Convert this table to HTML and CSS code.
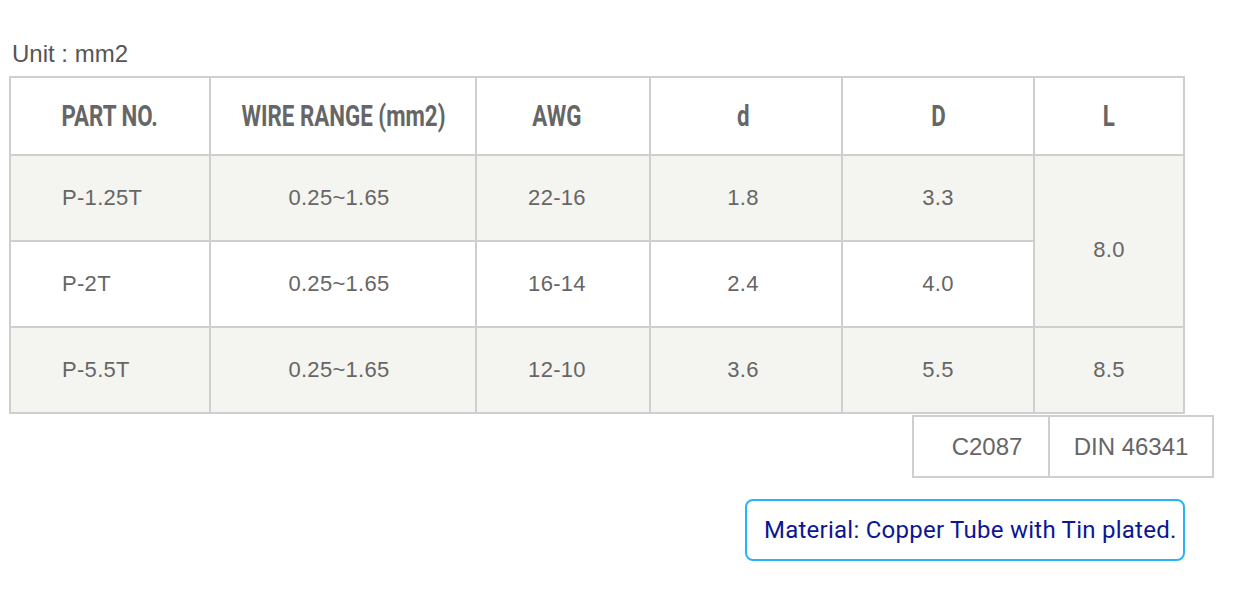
FILE: index.html
```html
<!DOCTYPE html>
<html>
<head>
<meta charset="utf-8">
<link rel="stylesheet" href="styles.css">
</head>
<body>
<div class="page">
  <div class="unit">Unit : mm2</div>
  <table class="spec">
    <colgroup>
      <col class="c1"><col class="c2"><col class="c3"><col class="c4"><col class="c5"><col class="c6">
    </colgroup>
    <thead>
      <tr>
        <th><span class="hd">PART NO.</span></th>
        <th class="sh8"><span class="hd">WIRE RANGE (mm2)</span></th>
        <th class="sh12"><span class="hd">AWG</span></th>
        <th class="sh6"><span class="hd">d</span></th>
        <th><span class="hd">D</span></th>
        <th><span class="hd">L</span></th>
      </tr>
    </thead>
    <tbody>
      <tr class="shade">
        <td class="part">P-1.25T</td>
        <td class="sh8">0.25~1.65</td>
        <td class="sh12">22-16</td>
        <td class="sh6">1.8</td>
        <td>3.3</td>
        <td rowspan="2" class="shade-cell merged">8.0</td>
      </tr>
      <tr>
        <td class="part">P-2T</td>
        <td class="sh8">0.25~1.65</td>
        <td class="sh12">16-14</td>
        <td class="sh6">2.4</td>
        <td>4.0</td>
      </tr>
      <tr class="shade">
        <td class="part">P-5.5T</td>
        <td class="sh8">0.25~1.65</td>
        <td class="sh12">12-10</td>
        <td class="sh6">3.6</td>
        <td>5.5</td>
        <td>8.5</td>
      </tr>
    </tbody>
  </table>
  <div class="std-row">
    <table class="std">
      <tr>
        <td class="s1">C2087</td>
        <td class="s2">DIN 46341</td>
      </tr>
    </table>
  </div>
  <div class="mat-row">
    <div class="material">Material: Copper Tube with Tin plated.</div>
  </div>
</div>
</body>
</html>
```

FILE: styles.css
```css
html, body {
  margin: 0;
  padding: 0;
  background: #fff;
}
.page {
  padding-left: 9px;
  font-family: "Liberation Sans", Arial, sans-serif;
  color: #666;
}
.unit {
  margin-top: 41px;
  height: 26px;
  line-height: 26px;
  font-size: 24px;
  padding-left: 3px;
  color: #555;
  margin-bottom: 9px;
}
.spec {
  border-collapse: collapse;
  table-layout: fixed;
  width: 1176px;
}
.spec .c1 { width: 200px; }
.spec .c2 { width: 266px; }
.spec .c3 { width: 174px; }
.spec .c4 { width: 192px; }
.spec .c5 { width: 192px; }
.spec .c6 { width: 150px; }
.spec th, .spec td {
  border: 2px solid #cfcfcf;
  text-align: center;
  vertical-align: middle;
  padding: 0;
}
.spec thead tr { height: 78px; }
.spec tbody tr { height: 86px; }
.spec th {
  font-family: Roboto, "DejaVu Sans Condensed", sans-serif;
  font-weight: bold;
  font-size: 29px;
  color: #666;
  background: #fff;
  white-space: nowrap;
  overflow: hidden;
}
.hd {
  display: inline-block;
  transform: scaleX(0.77);
  transform-origin: center;
}
.spec td {
  font-size: 22px;
  letter-spacing: 0.3px;
  color: #666;
}
.spec .sh8 { padding-right: 8px; }
.spec .sh12 { padding-right: 12px; }
.spec .sh6 { padding-right: 6px; }
.spec td.part {
  text-align: left;
  padding-left: 51px;
}
.spec td.merged {
  padding-top: 18px;
}
.shade td, .spec td.shade-cell {
  background: #f4f4f0;
}
.std-row {
  width: 1205px;
  display: flex;
  justify-content: flex-end;
  margin-top: 1px;
}
.std {
  border-collapse: collapse;
  table-layout: fixed;
}
.std td {
  border: 2px solid #cfcfcf;
  height: 59px;
  padding: 0;
  font-size: 24px;
  color: #666;
  text-align: center;
}
.std .s1 { width: 136px; padding-left: 12px; box-sizing: border-box; }
.std .s2 { width: 162px; }
.mat-row {
  width: 1176px;
  display: flex;
  justify-content: flex-end;
  margin-top: 21px;
}
.material {
  width: 440px;
  height: 62px;
  box-sizing: border-box;
  border: 2px solid #29b4f8;
  border-radius: 8px;
  padding-left: 17px;
  display: flex;
  align-items: center;
  font-family: Roboto, "Liberation Sans", sans-serif;
  font-size: 24px;
  letter-spacing: 0.25px;
  color: #0b1694;
  white-space: nowrap;
}
```
